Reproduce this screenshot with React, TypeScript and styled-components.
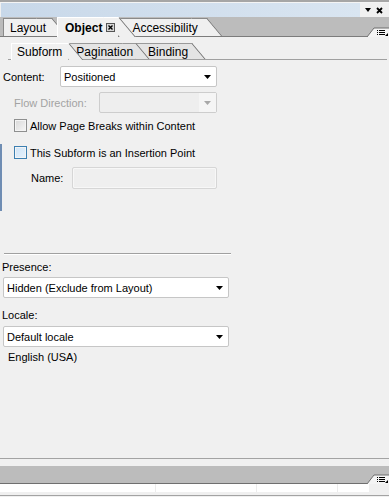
import React from 'react';
import styled, {createGlobalStyle} from 'styled-components';

const Global = createGlobalStyle`
  html, body {
    margin: 0;
    padding: 0;
    background: #f0f0f0;
  }
  body {
    font-family: 'Liberation Sans', Arial, sans-serif;
    font-size: 11px;
    color: #000;
  }
`;

const Panel = styled.div`
  display: flex;
  flex-direction: column;
  width: 389px;
  height: 497px;
  overflow: hidden;
  background: #f0f0f0;
`;

const TopEdge = styled.div`
  height: 2px;
  background: #a6a6a6;
  border-bottom: 1px solid #f4f4f4;
`;

const TitleBar = styled.div`
  display: flex;
  height: 14px;
`;

const TitleFill = styled.div`
  flex: 1;
  margin-left: 1px;
  background: linear-gradient(to right, #c8d8e9, #d9e5f1);
`;

const TitleButtons = styled.div`
  display: flex;
  align-items: center;
  gap: 5px;
  width: 24px;
  padding-left: 5px;
`;

const TabStrip = styled.div`
  position: relative;
  display: flex;
  align-items: flex-end;
  height: 20px;
  padding-left: 3px;
  background: #bcbcbc;

  &::after {
    content: '';
    position: absolute;
    left: 0;
    right: 20px;
    bottom: 0;
    height: 1px;
    background: #7c7c7c;
  }
`;

const Tab = styled.div<{$active?: boolean; $z: number; $pl: number; $pr: number; $ml?: number}>`
  position: relative;
  z-index: ${(p) => p.$z};
  display: flex;
  align-items: center;
  gap: 4px;
  box-sizing: border-box;
  height: ${(p) => (p.$active ? 20 : 18)}px;
  margin-left: ${(p) => p.$ml ?? 0}px;
  margin-bottom: ${(p) => (p.$active ? 0 : 1)}px;
  padding: 0 ${(p) => p.$pr}px 0 ${(p) => p.$pl}px;
  font-size: 12px;
  font-weight: ${(p) => (p.$active ? 'bold' : 'normal')};
  background: #f0f0f0;
  border-top: 1px solid ${(p) => (p.$active ? '#ffffff' : '#8a8a8a')};
  border-left: 1px solid ${(p) => (p.$active ? '#ffffff' : '#8a8a8a')};

  &::after {
    content: '';
    position: absolute;
    z-index: -1;
    top: -1px;
    bottom: 0;
    left: calc(100% - 15px);
    width: 15px;
    background: #f0f0f0;
    border-top: 1px solid ${(p) => (p.$active ? '#ffffff' : '#8a8a8a')};
    border-right: 1px solid #6a6a6a;
    transform: skewX(40deg);
    transform-origin: top left;
  }
`;

const MenuButton = styled.div`
  display: flex;
  margin-left: auto;
  position: relative;
  z-index: 4;
`;

const SubStrip = styled.div`
  position: relative;
  display: flex;
  align-items: flex-end;
  height: 19px;
  margin: 4px 2px 0 8px;
  padding-left: 3px;

  &::after {
    content: '';
    position: absolute;
    left: 0;
    right: 0;
    bottom: 0;
    height: 1px;
    background: #a0a0a0;
  }
`;

const SubTab = styled.div<{$active?: boolean; $z: number; $pl: number; $pr: number}>`
  position: relative;
  z-index: ${(p) => p.$z};
  display: flex;
  align-items: center;
  box-sizing: border-box;
  height: ${(p) => (p.$active ? 17 : 16)}px;
  margin-bottom: ${(p) => (p.$active ? 0 : 1)}px;
  padding: 0 ${(p) => p.$pr}px 0 ${(p) => p.$pl}px;
  font-size: 12px;
  background: ${(p) => (p.$active ? '#f0f0f0' : '#e4e4e4')};
  border-top: 1px solid ${(p) => (p.$active ? '#ffffff' : '#9a9a9a')};
  border-left: 1px solid ${(p) => (p.$active ? '#ffffff' : '#9a9a9a')};

  &::after {
    content: '';
    position: absolute;
    z-index: -1;
    top: -1px;
    bottom: 0;
    left: calc(100% - 13px);
    width: 13px;
    background: ${(p) => (p.$active ? '#f0f0f0' : '#e4e4e4')};
    border-top: 1px solid ${(p) => (p.$active ? '#ffffff' : '#9a9a9a')};
    border-right: 1px solid #6a6a6a;
    transform: skewX(40deg);
    transform-origin: top left;
  }
`;

const Form = styled.div`
  display: flex;
  flex-direction: column;
  padding-top: 6px;
`;

const Row = styled.div<{$indent: number; $mt?: number; $h?: number}>`
  display: flex;
  align-items: center;
  height: ${(p) => p.$h ?? 21}px;
  margin-top: ${(p) => p.$mt ?? 0}px;
  padding-left: ${(p) => p.$indent}px;
`;

const Label = styled.span<{$width?: number; $disabled?: boolean}>`
  flex: none;
  width: ${(p) => (p.$width ? `${p.$width}px` : 'auto')};
  color: ${(p) => (p.$disabled ? '#a3a3a3' : '#000')};
  white-space: nowrap;
`;

const Select = styled.div<{$width: number; $disabled?: boolean}>`
  display: flex;
  align-items: center;
  box-sizing: border-box;
  width: ${(p) => p.$width}px;
  height: 21px;
  padding-left: 3px;
  border: 1px solid ${(p) => (p.$disabled ? '#cdcdcd' : '#c6c6c6')};
  border-radius: 2px;
  background: ${(p) => (p.$disabled ? '#eeeeee' : '#ffffff')};
`;

const SelectValue = styled.span`
  flex: 1;
  white-space: nowrap;
`;

const ArrowBox = styled.span<{$disabled?: boolean}>`
  display: flex;
  align-items: center;
  justify-content: center;
  align-self: stretch;
  width: 17px;
  background: ${(p) => (p.$disabled ? '#f5f5f5' : 'transparent')};
`;

const TextInput = styled.div<{$width: number}>`
  box-sizing: border-box;
  width: ${(p) => p.$width}px;
  height: 22px;
  border: 1px solid #d6d6d6;
  border-radius: 2px;
  background: #efefef;
  box-shadow: inset 0 0 0 1px #f7f7f7;
`;

const Check = styled.span<{$focused?: boolean}>`
  flex: none;
  box-sizing: border-box;
  width: 13px;
  height: 13px;
  margin-right: 3px;
  border: 1px solid ${(p) => (p.$focused ? '#3c7fb1' : '#8e8f8f')};
  background: ${(p) =>
    p.$focused
      ? 'linear-gradient(135deg, #cfe4f7, #e6f2fc)'
      : 'linear-gradient(135deg, #d8d8d8, #f6f6f6)'};
  box-shadow: inset 0 0 0 1px #f4f4f4;
`;

const Group = styled.div`
  display: flex;
  flex-direction: column;
  height: 67px;
  margin-top: 12px;
  border-left: 2px solid #6f8db3;
`;

const Separator = styled.div`
  width: 227px;
  height: 1px;
  margin: 42px 0 0 4px;
  background: #a0a0a0;
  box-shadow: 0 1px 0 #ffffff;
`;

const Spacer = styled.div`
  flex: 1;
`;

const BottomLine = styled.div`
  height: 1px;
  background: #a3a3a3;
`;

const BottomBand = styled.div`
  display: flex;
  align-items: flex-end;
  height: 18px;
  margin-top: 7px;
  background: #bcbcbc;
`;

const BandRule = styled.div`
  flex: 1;
  height: 1px;
  background: #6f6f6f;
`;

const ColumnRow = styled.div`
  display: flex;
  height: 8px;
  width: 369px;
  background: #ffffff;
`;

const Column = styled.div<{$width: number}>`
  width: ${(p) => p.$width}px;
  border-right: 1px solid #ececec;
`;

const FootLine = styled.div`
  height: 1px;
  margin: 3px 0 1px;
  background: #a3a3a3;
`;

const DownArrow = ({color = '#000'}: {color?: string}) => (
  <svg width="7" height="4" viewBox="0 0 7 4">
    <polygon points="0,0 7,0 3.5,4" fill={color} />
  </svg>
);

const MenuIcon = () => (
  <svg width="22" height="10" viewBox="0 0 22 10">
    <polygon points="0,10 7,1 22,1 22,10" fill="#f4f4f4" />
    <polyline points="0,10 7,1 22,1" fill="none" stroke="#6f6f6f" strokeWidth="1" />
    <rect x="10" y="3" width="1" height="1" fill="#000" />
    <rect x="12" y="3" width="6" height="1" fill="#000" />
    <rect x="10" y="5" width="1" height="1" fill="#000" />
    <rect x="12" y="5" width="6" height="1" fill="#000" />
    <rect x="10" y="7" width="1" height="1" fill="#000" />
    <rect x="12" y="7" width="6" height="1" fill="#000" />
    <polygon points="21,6 21,9 18,9" fill="#000" />
  </svg>
);

const CloseBox = () => (
  <svg width="9" height="9" viewBox="0 0 9 9">
    <rect x="0.5" y="0.5" width="8" height="8" fill="#d6d6d6" stroke="#555" />
    <path d="M2.5 2.5 L6.5 6.5 M6.5 2.5 L2.5 6.5" stroke="#000" strokeWidth="1.4" />
  </svg>
);

const App = () => (
  <>
    <Global />
    <Panel>
      <TopEdge />
      <TitleBar>
        <TitleFill />
        <TitleButtons>
          <svg width="6" height="4" viewBox="0 0 6 4">
            <polygon points="0,0 6,0 3,4" fill="#000" />
          </svg>
          <svg width="7" height="7" viewBox="0 0 7 7">
            <path d="M1 1 L6 6 M6 1 L1 6" stroke="#000" strokeWidth="1.8" />
          </svg>
        </TitleButtons>
      </TitleBar>

      <TabStrip>
        <Tab $z={2} $pl={6} $pr={5}>Layout</Tab>
        <Tab $active $z={3} $pl={7} $pr={3} $ml={6}>
          Object
          <CloseBox />
        </Tab>
        <Tab $z={1} $pl={13} $pr={8}>Accessibility</Tab>
        <MenuButton>
          <MenuIcon />
        </MenuButton>
      </TabStrip>

      <SubStrip>
        <SubTab $active $z={3} $pl={5} $pr={6}>Subform</SubTab>
        <SubTab $z={2} $pl={7} $pr={2}>Pagination</SubTab>
        <SubTab $z={1} $pl={12} $pr={3}>Binding</SubTab>
      </SubStrip>

      <Form>
        <Row $indent={3}>
          <Label $width={57}>Content:</Label>
          <Select $width={157}>
            <SelectValue>Positioned</SelectValue>
            <ArrowBox>
              <DownArrow />
            </ArrowBox>
          </Select>
        </Row>
        <Row $indent={14} $mt={5}>
          <Label $width={85} $disabled>
            Flow Direction:
          </Label>
          <Select $width={118} $disabled>
            <SelectValue />
            <ArrowBox $disabled>
              <DownArrow color="#a8a8a8" />
            </ArrowBox>
          </Select>
        </Row>
        <Row $indent={14} $mt={6} $h={13}>
          <Check />
          <Label>Allow Page Breaks within Content</Label>
        </Row>
        <Group>
          <Row $indent={12} $mt={2} $h={13}>
            <Check $focused />
            <Label>This Subform is an Insertion Point</Label>
          </Row>
          <Row $indent={29} $mt={8} $h={22}>
            <Label $width={41}>Name:</Label>
            <TextInput $width={145} />
          </Row>
        </Group>
        <Separator />
        <Row $indent={2} $mt={6} $h={14}>
          <Label>Presence:</Label>
        </Row>
        <Row $indent={3} $mt={3}>
          <Select $width={226}>
            <SelectValue>Hidden (Exclude from Layout)</SelectValue>
            <ArrowBox>
              <DownArrow />
            </ArrowBox>
          </Select>
        </Row>
        <Row $indent={2} $mt={10} $h={14}>
          <Label>Locale:</Label>
        </Row>
        <Row $indent={3} $mt={4}>
          <Select $width={226}>
            <SelectValue>Default locale</SelectValue>
            <ArrowBox>
              <DownArrow />
            </ArrowBox>
          </Select>
        </Row>
        <Row $indent={8} $mt={3} $h={14}>
          <Label>English (USA)</Label>
        </Row>
      </Form>

      <Spacer />

      <BottomLine />
      <BottomBand>
        <BandRule />
        <MenuIcon />
      </BottomBand>
      <ColumnRow>
        <Column $width={155} />
        <Column $width={100} />
        <Column $width={80} />
      </ColumnRow>
      <FootLine />
    </Panel>
  </>
);

export default App;
